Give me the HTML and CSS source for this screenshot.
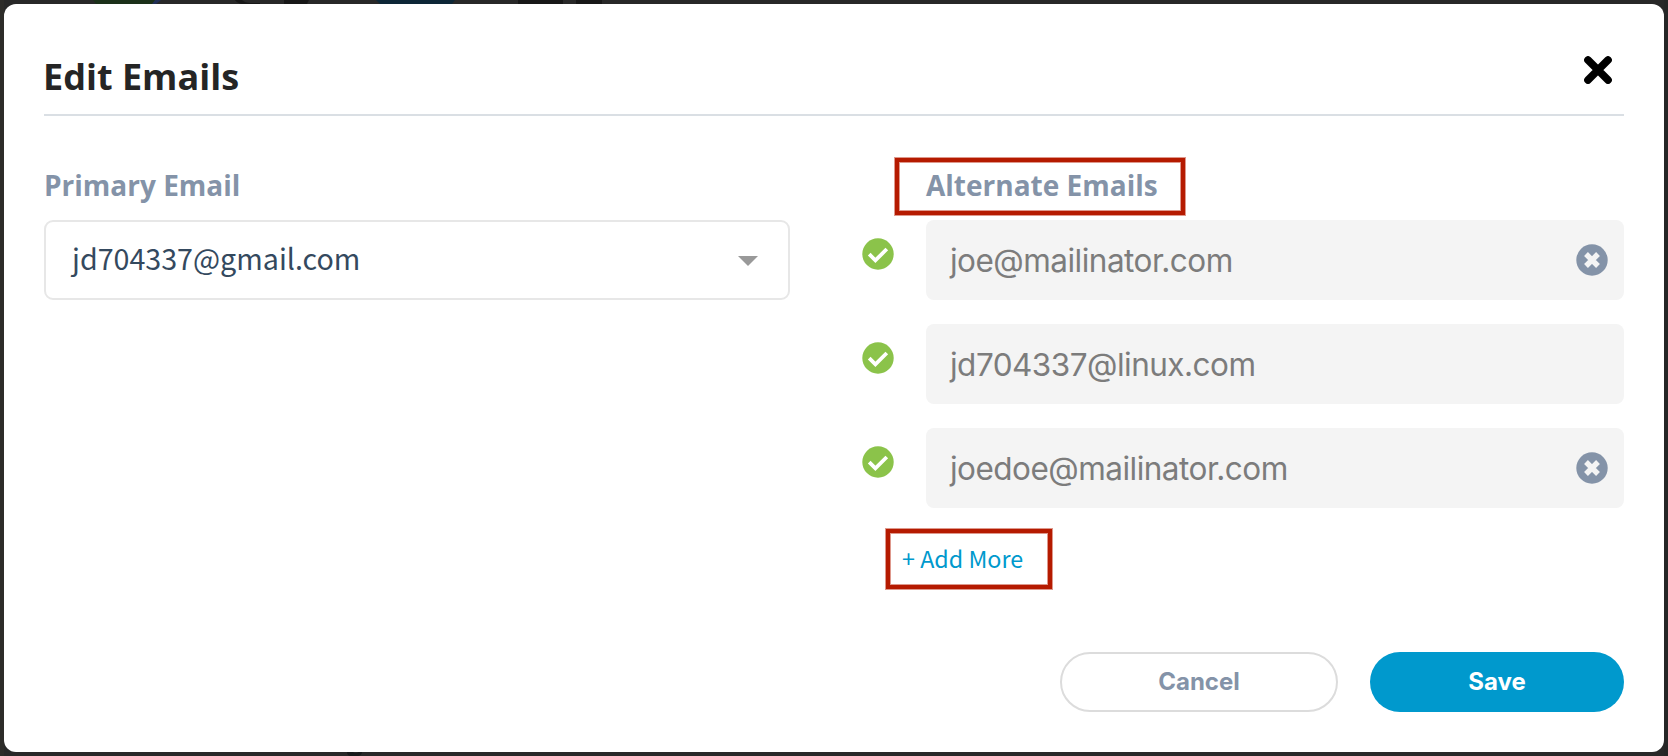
FILE: index.html
```html
<!DOCTYPE html>
<html lang="en">
<head>
<meta charset="utf-8">
<title>Edit Emails</title>
<link rel="stylesheet" href="styles.css">
</head>
<body>
<svg class="backdrop" viewBox="0 0 1668 756" aria-hidden="true">
  <path fill="#1b3019" d="M93 0h64l-4 4H96z"/>
  <path fill="#202f55" d="M155 0h6l-5 4h-4z"/>
  <path fill="#171717" d="M235 0h7q3 3 8 3h10v1h-18q-5-1-7-4zM284 0h25l-2 4h-23zM518 0h45v4h-45zM576 0h26v4h-26z"/>
  <path fill="#0d2636" d="M376 0h79l-3 4h-72z"/>
  <path fill="#171a1b" d="M347 752h6q2 2 6 0h3q0 3-4 4h-8q-3-1-3-4z"/>
</svg>
<svg class="sprite" aria-hidden="true">
  <symbol id="check" viewBox="0 0 32 32">
    <circle cx="16" cy="16" r="15.7" fill="#8bc34a"/>
    <path d="M7.2 16.2 13.4 22.4 24.8 11" fill="none" stroke="#fff" stroke-width="3.8"/>
  </symbol>
  <symbol id="remove" viewBox="0 0 32 32">
    <circle cx="16" cy="16" r="15.7" fill="#8493a8"/>
    <path d="M10 10 22 22M22 10 10 22" fill="none" stroke="#f4f4f4" stroke-width="5.4"/>
  </symbol>
</svg>
<main class="modal">
  <header class="modal-header">
    <h1 class="title">Edit Emails</h1>
    <button class="close" aria-label="Close">
      <svg width="28" height="28" viewBox="0 0 28 28"><path d="M4 4 24 24M24 4 4 24" stroke="#000" stroke-width="7.6" stroke-linecap="round"/></svg>
    </button>
  </header>
  <div class="columns">
    <section class="primary">
      <h2 class="label">Primary Email</h2>
      <div class="select">
        <span class="select-value">jd704337@gmail.com</span>
        <svg width="20" height="10" viewBox="0 0 20 10"><path d="M0 0h20L10 10z" fill="#999"/></svg>
      </div>
    </section>
    <section class="alternate">
      <h2 class="label alternate-label">Alternate Emails<span class="mark mark-label"></span></h2>
      <ul class="emails">
        <li class="row"><svg class="check"><use href="#check"/></svg><div class="field"><span>joe@mailinator.com</span><svg class="remove"><use href="#remove"/></svg></div></li>
        <li class="row"><svg class="check"><use href="#check"/></svg><div class="field"><span>jd704337@linux.com</span></div></li>
        <li class="row"><svg class="check"><use href="#check"/></svg><div class="field"><span>joedoe@mailinator.com</span><svg class="remove"><use href="#remove"/></svg></div></li>
      </ul>
      <div class="add"><a class="add-link">+ Add More</a><span class="mark mark-add"></span></div>
    </section>
  </div>
  <footer class="actions">
    <button class="btn cancel">Cancel</button>
    <button class="btn save">Save</button>
  </footer>
</main>
</body>
</html>
```
FILE: styles.css
```css
* { box-sizing: border-box; }
body {
  margin: 0;
  width: 1668px;
  height: 756px;
  padding: 4px;
  overflow: hidden;
  background: linear-gradient(90deg, #2d2c29 0 4px, #282828 4px 1664px, #252626 1664px);
  font-family: "Open Sans", sans-serif;
}
.backdrop { position: absolute; left: 0; top: 0; width: 1668px; height: 756px; }
.sprite { position: absolute; width: 0; height: 0; }
.modal {
  position: relative;
  display: flex;
  flex-direction: column;
  height: 748px;
  padding: 0 40px 40px;
  border-radius: 12px;
  background: #fff;
}
.modal-header {
  display: flex;
  justify-content: space-between;
  height: 112px;
  padding-top: 48px;
  border-bottom: 2px solid #dadfe4;
}
.title { margin: 0 0 0 -1px; font-size: 36px; line-height: 50px; font-weight: 700; color: #252525; white-space: nowrap; }
.close { display: block; width: 28px; height: 28px; margin: 4px 12px 0 0; padding: 0; border: 0; background: none; }
.close svg { display: block; }
.columns { display: flex; justify-content: space-between; padding-top: 50px; }
.primary { width: 746px; }
.alternate { width: 762px; }
.label { margin: 0 0 16px; font-size: 28px; line-height: 38px; font-weight: 700; color: #8493a8; white-space: nowrap; }
.alternate-label { position: relative; padding-left: 64px; }
.select {
  display: flex;
  align-items: center;
  justify-content: space-between;
  height: 80px;
  padding: 0 30px 0 26px;
  border: 2px solid #e7e7e7;
  border-radius: 9px;
  font: 28.65px/46px "Noto Sans CJK SC", sans-serif;
  color: #34495e;
}
.select-value { padding-bottom: 5px; }
.select svg { margin-top: 2px; }
.emails { display: flex; flex-direction: column; gap: 24px; margin: 0; padding: 0; list-style: none; }
.row { display: flex; justify-content: space-between; }
.check { width: 32px; height: 32px; margin-top: 18px; }
.field {
  display: flex;
  align-items: center;
  justify-content: space-between;
  width: 698px;
  height: 80px;
  padding: 2px 16px 0 24px;
  border-radius: 8px;
  background: #f4f4f4;
  font: 31.5px/40px Inter, sans-serif;
  letter-spacing: -0.52px;
  color: #7c7c7c;
}
.remove { width: 32px; height: 32px; margin-top: -2px; }
.add { position: relative; height: 60px; padding: 31px 0 0 40px; }
.add-link { display: block; font: 23.3px/38px "Noto Sans CJK SC", sans-serif; color: #0099cd; white-space: nowrap; }
.mark {
  position: absolute;
  border: 4px solid #b51a00;
  box-shadow: 0 0 0 1px rgba(181, 26, 0, 0.45), inset 0 0 0 1px rgba(181, 26, 0, 0.45);
}
.mark-label { left: 33px; top: -8px; width: 290px; height: 57px; }
.mark-add { left: 24px; top: 21px; width: 166px; height: 60px; }
.actions { display: flex; justify-content: flex-end; gap: 32px; margin-top: auto; }
.btn { height: 60px; padding: 0; border-radius: 30px; font: 700 24px/30px Inter, sans-serif; letter-spacing: -0.05px; }
.cancel { width: 278px; border: 2px solid #dcdcdc; background: #fff; color: #8493a8; }
.save { width: 254px; border: 0; background: #0099cd; color: #fff; }
```
